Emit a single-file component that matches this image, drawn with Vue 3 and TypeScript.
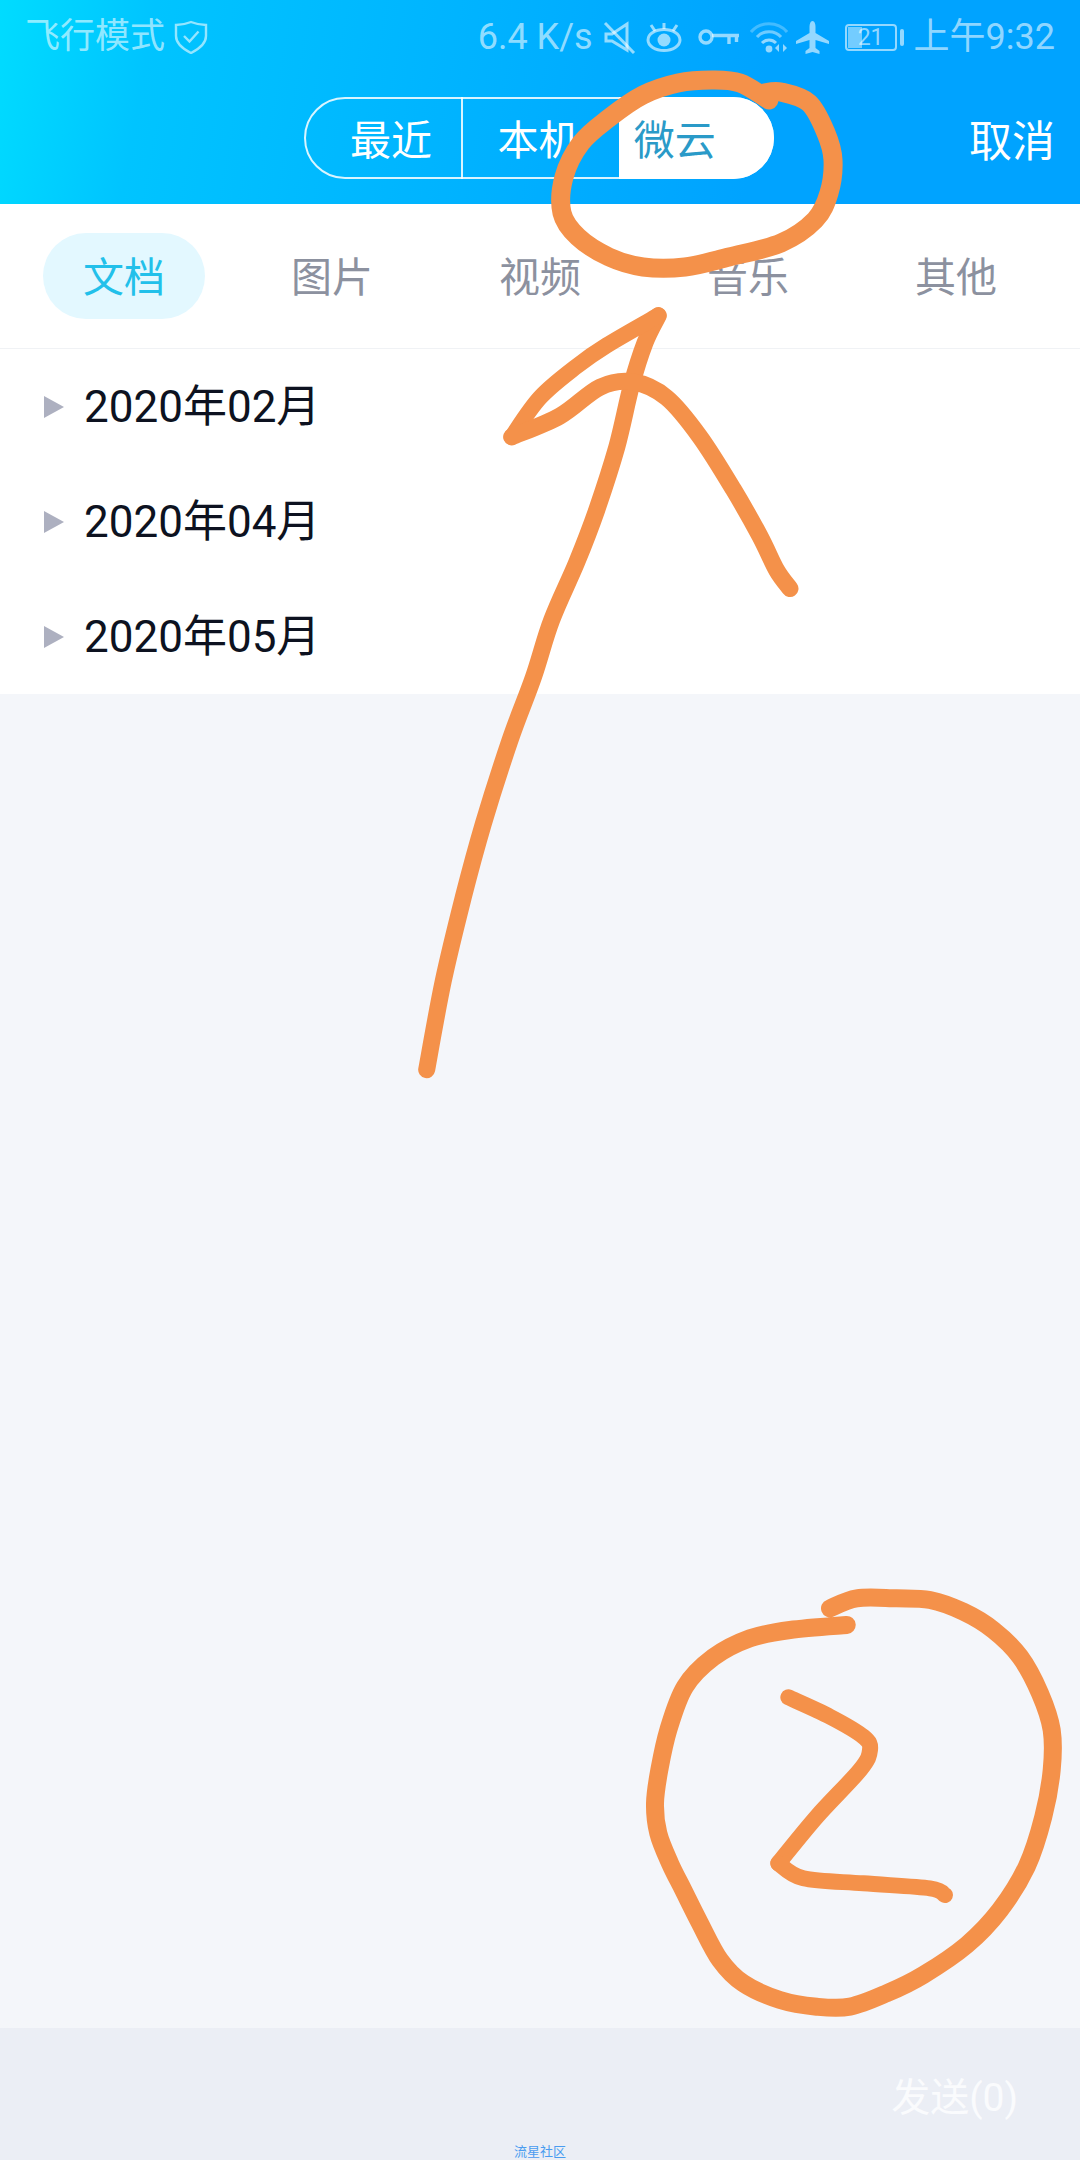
<script setup lang="ts">
type Pt = [number, number]

function smooth(p: Pt[]): string {
  let d = `M${p[0][0]} ${p[0][1]}`
  for (let i = 0; i < p.length - 1; i++) {
    const a = p[Math.max(i - 1, 0)]
    const b = p[i]
    const c = p[i + 1]
    const e = p[Math.min(i + 2, p.length - 1)]
    const c1x = b[0] + (c[0] - a[0]) / 6
    const c1y = b[1] + (c[1] - a[1]) / 6
    const c2x = c[0] - (e[0] - b[0]) / 6
    const c2y = c[1] - (e[1] - b[1]) / 6
    d += `C${c1x.toFixed(1)} ${c1y.toFixed(1)} ${c2x.toFixed(1)} ${c2y.toFixed(1)} ${c[0].toFixed(1)} ${c[1].toFixed(1)}`
  }
  return d
}

const circlePt = (p: Pt[]): Pt[] => p.map(([x, y]) => [630 + x / 3, 1570 + y / 3] as Pt)
const arrowPt = (p: Pt[]): Pt[] => p.map(([x, y]) => [400 + x / 3, 280 + y / 1.912] as Pt)

const tabs = ['文档', '图片', '视频', '音乐', '其他']
const months = ['2020年02月', '2020年04月', '2020年05月']

const scribbles = [
  {
    w: 19,
    pts: [[769,100],[740,83],[712,80],[678,83],[643,95],[609,118],[581,143],[564,177],[562,213],[578,237],[609,257],[643,267],[685,267],[729,257],[781,243],[815,220],[829,193],[833,160],[826,133],[809,103],[781,92],[764,93]] as Pt[],
  },
  {
    w: 17,
    pts: arrowPt([[80,1510],[130,1340],[190,1180],[250,1040],[330,880],[400,760],[455,650],[530,540],[590,440],[650,320],[695,200],[735,120],[775,68]]),
  },
  { w: 16, pts: arrowPt([[775,68],[620,125],[530,165],[420,225],[335,300]]) },
  {
    w: 17,
    pts: arrowPt([[335,300],[480,260],[600,205],[700,195],[800,225],[900,300],[1000,400],[1080,490],[1130,555],[1170,590]]),
  },
  {
    w: 18,
    pts: circlePt([[600,115],[680,85],[800,85],[900,90],[1000,125],[1090,180],[1170,260],[1230,370],[1265,480],[1265,600],[1240,740],[1190,890],[1110,1020],[1010,1125],[880,1215],[770,1270],[660,1310],[560,1310],[450,1290],[340,1240],[270,1170],[210,1060],[160,960],[120,880],[85,790],[75,700],[88,600],[115,480],[165,350],[250,262],[360,205],[480,180],[650,165]]),
  },
  { w: 16, pts: circlePt([[475,382],[600,440],[700,500],[720,540],[690,600],[560,740],[445,880]]) },
  { w: 16, pts: circlePt([[445,880],[520,925],[700,940],[900,955],[945,975]]) },
].map((s) => ({ w: s.w, d: smooth(s.pts) }))
</script>

<template>
  <div class="page">
    <header class="header">
      <div class="status">
        <div class="status-left">
          <span>飞行模式</span>
          <svg class="shield" width="34" height="34" viewBox="0 0 34 34" fill="none" stroke="currentColor">
            <path d="M17 2 C22 4 27 5 32 5 V16 C32 24 25 29 17 33 C9 29 2 24 2 16 V5 C7 5 12 4 17 2Z" stroke-width="2.4" />
            <path d="M10 16 L15.5 21.5 L24.5 11.5" stroke-width="2.4" />
          </svg>
        </div>
        <div class="status-right">
          <span class="speed">6.4 K/s</span>
          <svg class="i-mute" width="33" height="33" viewBox="0 0 33 33" fill="none" stroke="currentColor" stroke-width="3">
            <path d="M3 13h6L24 3v26L9 20H3z" />
            <path d="M2 2l29 30" />
          </svg>
          <svg class="i-eye" width="36" height="30" viewBox="0 0 36 30" fill="none" stroke="currentColor" stroke-width="3">
            <ellipse cx="18" cy="18" rx="16" ry="10.5" />
            <circle cx="18" cy="18" r="6.5" fill="currentColor" stroke="none" />
            <path d="M18 7V1M9 9L5 3M27 9l4-6" />
          </svg>
          <svg class="i-key" width="41" height="16" viewBox="0 0 41 16" fill="none" stroke="currentColor" stroke-width="3.4">
            <circle cx="8" cy="8" r="6" />
            <path d="M14 6.5H41M31 6.5V15M38.5 6.5V13" />
          </svg>
          <svg class="i-wifi" width="38" height="32" viewBox="0 0 38 32" fill="none" stroke="currentColor" stroke-width="3">
            <path d="M1 11C10 0 28 0 37 11" opacity=".45" />
            <path d="M7 16C13 9 25 9 31 16" opacity=".75" />
            <path d="M12 22C16 18 22 18 26 22" />
            <circle cx="19" cy="28" r="3.4" fill="currentColor" stroke="none" />
            <path d="M29 23v8l-4-4zM33 31v-8l4 4z" fill="currentColor" stroke="none" />
          </svg>
          <svg class="i-plane" width="33" height="33" viewBox="0 0 33 33" fill="currentColor">
            <path d="M16.5 0C18.5 0 19.5 3 19.5 6V12L33 20V23L19.5 19V27L23.5 30V33L16.5 31L9.5 33V30L13.5 27V19L0 23V20L13.5 12V6C13.5 3 14.5 0 16.5 0Z" />
          </svg>
          <div class="battery">
            <div class="battery-body">
              <i class="battery-fill"></i>
              <span class="battery-text">21</span>
            </div>
            <i class="battery-nub"></i>
          </div>
          <span class="time">上午9:32</span>
        </div>
      </div>
      <div class="nav">
        <div class="segment">
          <div class="seg seg-recent">最近</div>
          <div class="seg seg-local">本机</div>
          <div class="seg seg-cloud">微云</div>
        </div>
        <div class="cancel">取消</div>
      </div>
    </header>

    <nav class="tabs">
      <div v-for="(tab, i) in tabs" :key="tab" class="tab" :class="{ active: i === 0 }">
        <span class="tab-label">{{ tab }}</span>
      </div>
    </nav>

    <section class="list">
      <div v-for="m in months" :key="m" class="row">
        <i class="tri"></i>
        <span class="month">{{ m }}</span>
      </div>
    </section>

    <div class="spacer"></div>

    <footer class="footer">
      <span class="send">发送(0)</span>
    </footer>

    <div class="watermark">流星社区</div>

    <svg class="ink" width="1080" height="2160" viewBox="0 0 1080 2160" fill="none" stroke="#f4914a" stroke-linecap="round" stroke-linejoin="round">
      <path v-for="(s, i) in scribbles" :key="i" :d="s.d" :stroke-width="s.w" />
    </svg>
  </div>
</template>

<style scoped>
.page {
  position: relative;
  width: 1080px;
  height: 2160px;
  overflow: hidden;
  display: flex;
  flex-direction: column;
  background: #f4f6fa;
  font-family: Roboto, "Noto Sans CJK SC", sans-serif;
}
.header {
  height: 204px;
  flex: none;
  background: linear-gradient(100deg, #00dcff 0, #00c4ff 14%, #00a3ff 70%, #00a3ff 100%);
  color: #fff;
}
.status {
  height: 74px;
  padding: 0 25px 0 25px;
  display: flex;
  align-items: center;
  justify-content: space-between;
  color: rgba(255, 255, 255, 0.58);
  font-size: 35px;
  line-height: 40px;
}
.status-left,
.status-right {
  display: flex;
  align-items: center;
}
.shield {
  margin-left: 9px;
}
.speed {
  font-size: 36px;
}
.i-mute {
  margin-left: 10px;
}
.i-eye {
  margin-left: 10px;
}
.i-key {
  margin-left: 16px;
}
.i-wifi {
  margin-left: 11px;
}
.i-plane {
  margin-left: 8px;
}
.battery {
  margin-left: 16px;
  display: flex;
  align-items: center;
}
.battery-body {
  position: relative;
  width: 52px;
  height: 27px;
  box-sizing: border-box;
  border: 2px solid currentColor;
  border-radius: 4px;
  display: flex;
  align-items: center;
  justify-content: center;
}
.battery-fill {
  position: absolute;
  left: 1px;
  top: 1px;
  bottom: 1px;
  width: 14px;
  background: rgba(255, 255, 255, 0.45);
}
.battery-text {
  position: relative;
  font-size: 23px;
  line-height: 23px;
}
.battery-nub {
  width: 4px;
  height: 17px;
  margin-left: 3px;
  border-radius: 2px;
  background: currentColor;
}
.time {
  margin-left: 10px;
  font-size: 36px;
}
.nav {
  display: flex;
  align-items: flex-start;
  padding: 23px 25px 0 304px;
}
.segment {
  width: 470px;
  height: 82px;
  box-sizing: border-box;
  display: flex;
  border: 2px solid rgba(255, 255, 255, 0.85);
  border-radius: 41px;
  font-size: 41px;
  line-height: 78px;
}
.seg {
  box-sizing: border-box;
  height: 82px;
  margin-top: -2px;
  padding-top: 5px;
}
.seg-recent {
  width: 158px;
  padding-left: 44px;
  border-right: 2px solid rgba(255, 255, 255, 0.85);
}
.seg-local {
  width: 156px;
  padding-left: 34px;
}
.seg-cloud {
  width: 156px;
  margin-right: -2px;
  padding-left: 15px;
  background: #fff;
  color: #2a9ac8;
  border-radius: 0 41px 41px 0;
}
.cancel {
  margin-left: auto;
  margin-top: 20px;
  font-size: 43px;
  line-height: 50px;
}
.tabs {
  height: 145px;
  flex: none;
  box-sizing: border-box;
  padding: 0 20px;
  display: flex;
  align-items: center;
  background: #fff;
  border-bottom: 1px solid #f0f2f5;
}
.tab {
  flex: 1;
  display: flex;
  justify-content: center;
}
.tab-label {
  box-sizing: border-box;
  width: 162px;
  height: 86px;
  margin-top: -1px;
  padding-top: 3px;
  border-radius: 43px;
  font-size: 41px;
  line-height: 84px;
  text-align: center;
  color: #8c919f;
}
.tab.active .tab-label {
  color: #22c0ea;
  background: #e3f8ff;
}
.list {
  flex: none;
  background: #fff;
}
.row {
  height: 115px;
  box-sizing: border-box;
  padding: 0 0 0 44px;
  display: flex;
  align-items: center;
}
.tri {
  width: 0;
  height: 0;
  border-left: 20px solid #adb0c0;
  border-top: 11px solid transparent;
  border-bottom: 11px solid transparent;
}
.month {
  margin-left: 20px;
  font-size: 44px;
  line-height: 50px;
  color: #0d1220;
}
.spacer {
  flex: 1;
}
.footer {
  height: 132px;
  flex: none;
  box-sizing: border-box;
  padding: 45px 62px 0 0;
  display: flex;
  justify-content: flex-end;
  align-items: flex-start;
  background: #ebeef5;
}
.send {
  font-size: 39px;
  line-height: 50px;
  color: #fafbfd;
}
.watermark {
  position: absolute;
  left: 514px;
  top: 2144px;
  font-size: 13px;
  line-height: 16px;
  color: #4a9cf0;
}
.ink {
  position: absolute;
  left: 0;
  top: 0;
  pointer-events: none;
}
</style>
